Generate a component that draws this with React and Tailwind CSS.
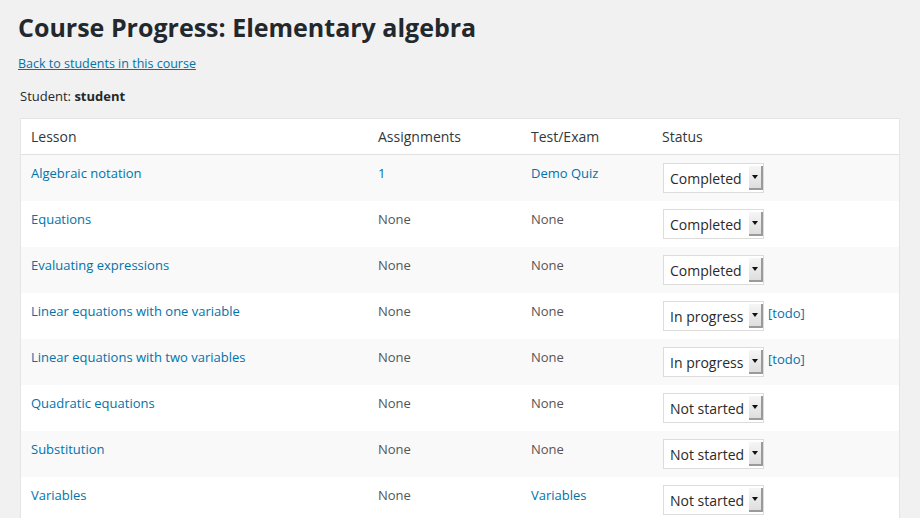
import React from "react";

const rows = [
  { lesson: "Algebraic notation", asg: "1", asgLink: true, test: "Demo Quiz", testLink: true, status: "Completed" },
  { lesson: "Equations", asg: "None", test: "None", status: "Completed" },
  { lesson: "Evaluating expressions", asg: "None", test: "None", status: "Completed" },
  { lesson: "Linear equations with one variable", asg: "None", test: "None", status: "In progress", todo: true },
  { lesson: "Linear equations with two variables", asg: "None", test: "None", status: "In progress", todo: true },
  { lesson: "Quadratic equations", asg: "None", test: "None", status: "Not started" },
  { lesson: "Substitution", asg: "None", test: "None", status: "Not started" },
  { lesson: "Variables", asg: "None", test: "Variables", testLink: true, status: "Not started" },
];

function Select({ value }) {
  return (
    <div className="flex h-[30px] w-[101px] items-stretch border border-[#dcdcdc] bg-white">
      <div className="flex flex-1 items-center pl-[6px] text-[14px] text-[#2a2a2a]">{value}</div>
      <div className="my-[2px] flex w-[14px] items-center justify-center border-r-2 border-b-2 border-[#9a9a9a] bg-gradient-to-b from-[#f6f6f6] to-[#dedede]">
        <div className="h-0 w-0 border-x-[3px] border-t-[4px] border-x-transparent border-t-[#111]" />
      </div>
    </div>
  );
}

export default function App() {
  return (
    <div
      className="min-h-[518px] bg-[#f1f1f1] pl-[18px] pr-[20px] pt-[11px]"
      style={{ fontFamily: "'Open Sans', 'Noto Sans', sans-serif" }}
    >
      <h1 className="text-[25px] font-bold leading-[32px] text-[#23282d]">
        Course Progress: Elementary algebra
      </h1>
      <div className="mt-[7px]">
        <a className="text-[12.5px] leading-[18px] text-[#0073aa] underline">Back to students in this course</a>
      </div>
      <div className="mt-[13px] pl-[2px] text-[13px] leading-[18px] text-[#23282d]">
        Student: <b>student</b>
      </div>
      <div className="ml-[2px] mt-[13px] w-[880px] border border-[#e5e5e5] bg-white">
        <div className="grid h-[36px] grid-cols-[346px_153px_131px_1fr] items-center border-b border-[#e1e1e1] text-[14px] text-[#32373c]">
          <div className="pl-[10px]">Lesson</div>
          <div className="pl-[11px]">Assignments</div>
          <div className="pl-[11px]">Test/Exam</div>
          <div className="pl-[11px]">Status</div>
        </div>
        {rows.map((r, i) => (
          <div
            key={r.lesson}
            className={`grid h-[46px] grid-cols-[346px_153px_131px_1fr] text-[13px] ${i % 2 === 0 ? "bg-[#f9f9f9]" : "bg-white"}`}
          >
            <div className="pl-[10px] pt-[8px] leading-[20px] text-[#0073aa]">{r.lesson}</div>
            <div className={`pl-[11px] pt-[8px] leading-[20px] ${r.asgLink ? "text-[#0073aa]" : "text-[#555]"}`}>{r.asg}</div>
            <div className={`pl-[11px] pt-[8px] leading-[20px] ${r.testLink ? "text-[#0073aa]" : "text-[#555]"}`}>{r.test}</div>
            <div className="flex items-start gap-[4px] pl-[12px] pt-[8px]">
              <Select value={r.status} />
              {r.todo && <a className="pt-[2px] leading-[20px] text-[#0073aa]">[todo]</a>}
            </div>
          </div>
        ))}
      </div>
    </div>
  );
}
